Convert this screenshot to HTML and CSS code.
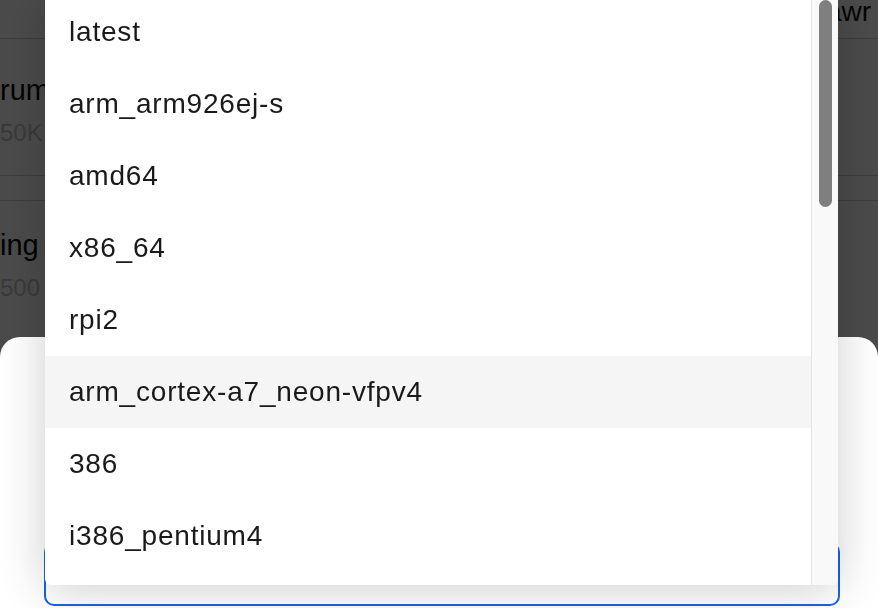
FILE: index.html
```html
<!DOCTYPE html>
<html lang="en">
<head>
    <meta charset="UTF-8">
    <meta name="viewport" content="width=device-width, initial-scale=1.0">
    <title>Select architecture</title>
    <link rel="stylesheet" href="styles.css">
</head>
<body>
    <!-- Package list behind the sheet -->
    <div class="page">
        <div class="topbar"><span>awr</span></div>
        <div class="pkg first">
            <div class="pkg-name">rum</div>
            <div class="pkg-size">50K</div>
        </div>
        <div class="divider"></div>
        <div class="pkg">
            <div class="pkg-name">ing</div>
            <div class="pkg-size">500</div>
        </div>
    </div>

    <div class="mask"></div>

    <!-- Bottom sheet with the architecture field -->
    <div class="sheet">
        <div class="field"></div>
    </div>

    <!-- Open dropdown -->
    <div class="dropdown">
        <ul class="options">
            <li>latest</li>
            <li>arm_arm926ej-s</li>
            <li>amd64</li>
            <li>x86_64</li>
            <li>rpi2</li>
            <li class="active">arm_cortex-a7_neon-vfpv4</li>
            <li>386</li>
            <li>i386_pentium4</li>
        </ul>
        <div class="scrollbar"><div class="thumb"></div></div>
    </div>
</body>
</html>
```

FILE: styles.css
```css
body {
    margin: 0;
    padding: 0;
    font-family: 'Liberation Sans', Arial, sans-serif;
    background: #fff;
    color: #111;
    overflow: hidden;
    height: 100vh;
}

.page {
    width: 100%;
}

.topbar {
    height: 38px;
    border-bottom: 1px solid #cdcdcd;
    padding-left: 826px;
    font-size: 28px;
    line-height: 24px;
    white-space: nowrap;
}

.pkg {
    padding: 24px 0 0 0;
}

.pkg.first {
    padding-top: 31px;
    padding-bottom: 25px;
    border-bottom: 1px solid #cdcdcd;
}

.pkg-name {
    font-size: 29px;
    line-height: 40px;
    font-weight: 500;
    color: #0a0a0a;
}

.pkg-size {
    margin-top: 6px;
    font-size: 24px;
    line-height: 34px;
    color: #c4c4c4;
}

.divider {
    height: 24px;
    border-bottom: 1px solid #cdcdcd;
}

.mask {
    position: fixed;
    inset: 0;
    background: rgba(0, 0, 0, 0.71);
}

.sheet {
    position: fixed;
    left: 0;
    right: 0;
    top: 337px;
    bottom: 0;
    background: #fff;
    border-radius: 20px 20px 0 0;
    display: flex;
    flex-direction: column;
    justify-content: flex-end;
    padding: 0 38px 2px 44px;
}

.field {
    height: 60px;
    border: 2px solid #1664e6;
    border-radius: 10px;
}

.dropdown {
    position: fixed;
    left: 45px;
    top: -8px;
    width: 793px;
    height: 593px;
    display: flex;
    background: #fff;
    border-radius: 6px;
    box-shadow: 0 4px 48px rgba(0, 0, 0, 0.2);
    overflow: hidden;
}

.options {
    flex: 1;
    list-style: none;
    margin: 0;
    padding: 4px 0 0;
}

.options li {
    height: 72px;
    line-height: 72px;
    padding-left: 24px;
    font-size: 28px;
    letter-spacing: 0.8px;
    color: #1a1a1a;
}

.options li.active {
    background: #f5f5f5;
}

.scrollbar {
    width: 27px;
    background: #f9f9f9;
    border-left: 1px solid #e6e6e6;
    padding-top: 8px;
    box-sizing: border-box;
}

.thumb {
    margin: 0 6px 0 7px;
    height: 207px;
    border-radius: 7px;
    background: #7f7f7f;
}
```
